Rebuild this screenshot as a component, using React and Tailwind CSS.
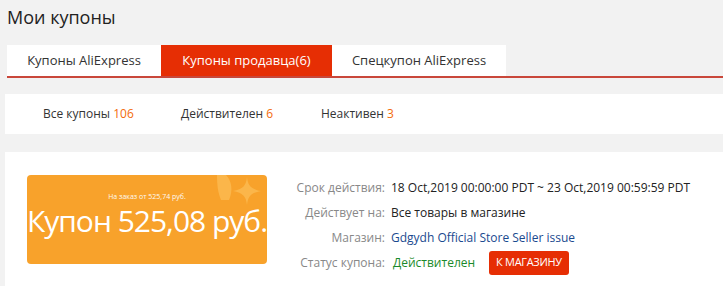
export default function App() {
  return (
    <div className="w-[723px] h-[286px] overflow-hidden bg-[#f2f2f2] text-[#333]" style={{ fontFamily: '"Open Sans", sans-serif' }}>
      <div className="pl-[7px] pt-[3px] h-[45px] text-[18px] leading-[28px] text-[#222]">Мои купоны</div>
      <div className="ml-[7px] flex h-[33px] border-b-2 border-[#c9473a]">
        <div className="w-[154px] bg-white flex items-center justify-center text-[13px] text-[#333]">Купоны AliExpress</div>
        <div className="w-[171px] bg-[#e62e04] flex items-center justify-center text-[13px] text-white">Купоны продавца(6)</div>
        <div className="w-[174px] bg-white flex items-center justify-center text-[13px] text-[#333]">Спецкупон AliExpress</div>
      </div>
      <div className="ml-[5px] mt-[16px] h-[40px] bg-white flex items-center text-[12px]">
        <div className="ml-[38px] w-[138px]">Все купоны <span className="text-[#f36b0b]">106</span></div>
        <div className="w-[140px]">Действителен <span className="text-[#f36b0b]">6</span></div>
        <div>Неактивен <span className="text-[#f36b0b]">3</span></div>
      </div>
      <div className="ml-[5px] mt-[18px] h-[140px] bg-white flex pt-[23px]">
        <div className="ml-[22px] w-[240px] h-[89px] rounded-[4px] bg-[#f8a22b] relative flex flex-col items-center text-white overflow-hidden">
          <svg className="absolute left-[188px] top-0" width="52" height="32" viewBox="0 0 52 32">
            <path d="M2 0 H11 C17 6 18 16 14 25 H6 C3 18 2 10 2 0 Z" fill="#fbb64a" />
            <path d="M32 2 C33 11 36 14 46 16 C36 18 33 21 32 30 C31 21 28 18 18 16 C28 14 31 11 32 2 Z" fill="#fbb64a" />
          </svg>
          <div className="mt-[17px] text-[7px] leading-[10px] opacity-95 relative">На заказ от 525,74 руб.</div>
          <div className="text-[30px] leading-[38px] whitespace-nowrap tracking-[-1px] relative">Купон 525,08 руб.</div>
        </div>
        <div className="ml-[24px] text-[12px] flex flex-col">
          <div className="flex h-[25px] items-center"><span className="w-[100px] whitespace-nowrap text-right text-[#888] pr-[6px]">Срок действия:</span><span className="text-[#222] whitespace-nowrap">18 Oct,2019 00:00:00 PDT ~ 23 Oct,2019 00:59:59 PDT</span></div>
          <div className="flex h-[25px] items-center"><span className="w-[100px] whitespace-nowrap text-right text-[#888] pr-[6px]">Действует на:</span><span className="text-[#222]">Все товары в магазине</span></div>
          <div className="flex h-[25px] items-center"><span className="w-[100px] whitespace-nowrap text-right text-[#888] pr-[6px]">Магазин:</span><span className="text-[#1a4a8f]">Gdgydh Official Store Seller issue</span></div>
          <div className="flex h-[25px] items-center"><span className="w-[100px] whitespace-nowrap text-right text-[#888] pr-[6px]">Статус купона:</span><span className="text-[#1a8a2a] ml-[2px]">Действителен</span>
            <span className="ml-[14px] h-[24px] px-[7px] rounded-[3px] bg-[#e62e04] text-white text-[11px] flex items-center tracking-[-0.3px] whitespace-nowrap">К МАГАЗИНУ</span></div>
        </div>
      </div>
    </div>
  );
}
